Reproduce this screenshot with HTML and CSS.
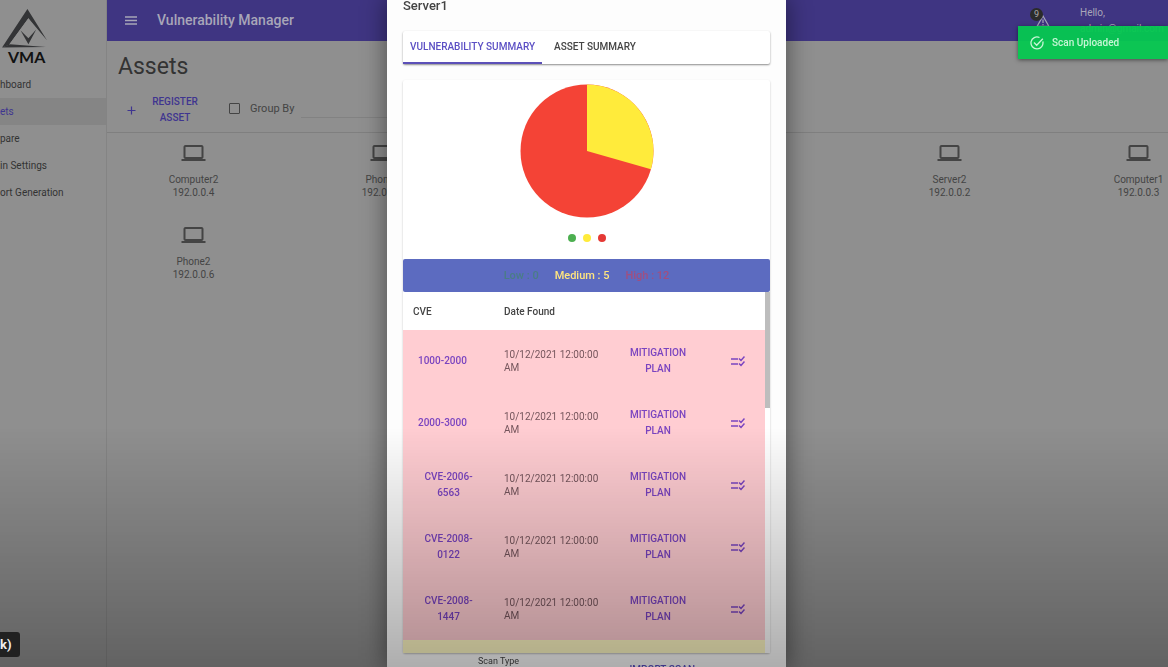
FILE: index.html
```html
<!DOCTYPE html>
<html lang="en">
<head>
<meta charset="utf-8">
<title>Vulnerability Manager</title>
<link rel="stylesheet" href="styles.css">
</head>
<body>
<svg class="sprite" aria-hidden="true">
  <symbol id="laptop" viewBox="0 0 24 24"><path d="M20 18c1.100 0 2-.9 2-2V6c0-1.100-.9-2-2-2H4c-1.100 0-2 .9-2 2v10c0 1.100.9 2 2 2H0v2h24v-2h-4zM4 6h16v10H4V6z"/></symbol>
  <symbol id="rule" viewBox="0 0 14 12"><path d="M0 4h7M0 9h7M8 3.500l2 2L13.500 1.500M8 8.500l2 2L13.500 6.500" fill="none" stroke="currentColor" stroke-width="1.500"/></symbol>
</svg>
<div class="app">
  <aside class="sidebar">
    <div class="brand">
      <svg class="brand-mark" viewBox="0 0 48 42" aria-hidden="true">
        <path d="M27 0L1 39.500L8 37L28 9.500L47 32Z" fill="#333436"/>
        <path d="M28 9.500L8 37L46 38L41 28Z" fill="#8f8f8f"/>
        <path d="M1 39.500L9 36L46 39Z" fill="#333436"/>
        <path d="M20 22L28 30L36 21L28 36Z" fill="#333436"/>
      </svg>
      <span class="brand-name">VMA</span>
    </div>
    <nav class="nav">
      <a href="#dashboard" aria-label="Dashboard">hboard</a>
      <a href="#assets" aria-label="Assets" class="active">ets</a>
      <a href="#compare" aria-label="Compare">pare</a>
      <a href="#admin" aria-label="Admin Settings">in Settings</a>
      <a href="#reports" aria-label="Report Generation">ort Generation</a>
    </nav>
  </aside>
  <div class="main">
    <header class="topbar">
      <button class="menu" aria-label="Menu"><svg width="12" height="9" viewBox="0 0 12 9"><path d="M0 1h12M0 4.500h12M0 8h12" stroke="currentColor" stroke-width="1.300"/></svg></button>
      <span class="app-name">Vulnerability Manager</span>
      <button class="alerts" aria-label="Alerts"><svg width="14" height="12" viewBox="0 0 14 12"><path d="M7 1L13 11.400H1ZM7 4.500v3.500M7 9v1.200" fill="none" stroke="currentColor" stroke-width="1.200"/></svg><span class="badge">9</span></button>
      <div class="user"><span>Hello,</span><span>admin@gmail.com</span></div>
    </header>
    <h1>Assets</h1>
    <div class="toolbar">
      <button class="register"><svg width="9" height="9" viewBox="0 0 9 9"><path d="M4.500 0.500v8M0.500 4.500h8" stroke="currentColor" stroke-width="1.200"/></svg><span>REGISTER ASSET</span></button>
      <label class="group"><input type="checkbox">Group By</label>
      <select class="group-field" aria-label="Group field"><option></option></select>
    </div>
    <div class="assets">
      <div class="asset"><svg><use href="#laptop"/></svg><span>Computer2</span><span>192.0.0.4</span></div>
      <div class="asset"><svg><use href="#laptop"/></svg><span>Phone1</span><span>192.0.0.5</span></div>
      <div class="asset"></div>
      <div class="asset"></div>
      <div class="asset"><svg><use href="#laptop"/></svg><span>Server2</span><span>192.0.0.2</span></div>
      <div class="asset"><svg><use href="#laptop"/></svg><span>Computer1</span><span>192.0.0.3</span></div>
      <div class="asset"><svg><use href="#laptop"/></svg><span>Phone2</span><span>192.0.0.6</span></div>
    </div>
  </div>
</div>

<div class="overlay">
  <section class="dialog" role="dialog" aria-labelledby="dialog-title">
    <h2 id="dialog-title">Server1</h2>
    <div class="tabs" role="tablist">
      <button role="tab" aria-selected="true" class="selected">VULNERABILITY SUMMARY</button>
      <button role="tab" aria-selected="false">ASSET SUMMARY</button>
    </div>
    <div class="card">
      <div class="chart">
        <svg width="134" height="134" viewBox="-67 -67 134 134" role="img" aria-label="Vulnerabilities by severity">
          <circle r="66.500" fill="#f44336"/>
          <path d="M0 0V-66.500A66.500 66.500 0 0 1 63.960 18.210Z" fill="#ffeb3b"/>
        </svg>
        <div class="legend"><i class="dot low"></i><i class="dot medium"></i><i class="dot high"></i></div>
      </div>
      <div class="totals"><span class="low">Low : 0</span><span class="medium">Medium : 5</span><span class="high">High : 12</span></div>
      <div class="list">
        <table>
          <colgroup><col class="c-cve"><col class="c-date"><col class="c-plan"><col></colgroup>
          <thead><tr><th>CVE</th><th>Date Found</th><th></th><th></th></tr></thead>
          <tbody>
            <tr><td><button>1000-2000</button></td><td>10/12/2021 12:00:00 AM</td><td class="plan"><button>MITIGATION PLAN</button></td><td class="act"><button aria-label="Resolve"><svg><use href="#rule"/></svg></button></td></tr>
            <tr><td><button>2000-3000</button></td><td>10/12/2021 12:00:00 AM</td><td class="plan"><button>MITIGATION PLAN</button></td><td class="act"><button aria-label="Resolve"><svg><use href="#rule"/></svg></button></td></tr>
            <tr><td><button>CVE-2006-6563</button></td><td>10/12/2021 12:00:00 AM</td><td class="plan"><button>MITIGATION PLAN</button></td><td class="act"><button aria-label="Resolve"><svg><use href="#rule"/></svg></button></td></tr>
            <tr><td><button>CVE-2008-0122</button></td><td>10/12/2021 12:00:00 AM</td><td class="plan"><button>MITIGATION PLAN</button></td><td class="act"><button aria-label="Resolve"><svg><use href="#rule"/></svg></button></td></tr>
            <tr><td><button>CVE-2008-1447</button></td><td>10/12/2021 12:00:00 AM</td><td class="plan"><button>MITIGATION PLAN</button></td><td class="act"><button aria-label="Resolve"><svg><use href="#rule"/></svg></button></td></tr>
            <tr class="warn"><td></td><td></td><td></td><td></td></tr>
          </tbody>
        </table>
        <div class="rail"><div class="thumb"></div></div>
      </div>
    </div>
    <div class="import"><span>Scan Type</span><button>IMPORT SCAN</button></div>
  </section>
</div>

<div class="toast" role="status">
  <svg width="14" height="14" viewBox="0 0 14 14"><path d="M12.800 5.500A6 6 0 1 1 9.500 1.500M4 6.500L6.700 9.200L12.800 2.800" fill="none" stroke="currentColor" stroke-width="1.300"/></svg>
  <span>Scan Uploaded</span>
</div>
<div class="shade"></div>
<div class="hint">k)</div>
</body>
</html>
```
FILE: styles.css
```css
* { box-sizing: border-box; }
body {
  margin: 0;
  height: 100vh;
  overflow: hidden;
  background: #8f8f8f;
  color: #444;
  font: 10px/13px Roboto, "Liberation Sans", sans-serif;
}
button {
  border: 0;
  padding: 0;
  background: none;
  color: inherit;
  font: inherit;
}
.sprite { display: none; }
.app { display: flex; height: 100vh; overflow: hidden; }

.sidebar { flex: 0 0 107px; border-right: 1px solid #848484; }
.brand {
  display: flex;
  flex-direction: column;
  align-items: flex-start;
  height: 71px;
  padding-top: 9px;
}
.brand-mark { width: 49px; height: 41px; }
.brand-name {
  padding-left: 8px;
  color: #111;
  font: 700 16px/14px Lato, sans-serif;
}
.nav { display: flex; flex-direction: column; }
.nav a {
  height: 27px;
  color: #333;
  line-height: 27px;
  text-decoration: none;
}
.nav .active {
  background: #858585;
  color: #3f3590;
}

.main { flex: 1; min-width: 0; overflow: hidden; }
.topbar {
  display: flex;
  align-items: center;
  height: 41px;
  padding-left: 18px;
  background: #3f3582;
  color: #a8a6b8;
}
.menu { display: flex; }
.app-name { margin-left: 20px; font-size: 14px; font-weight: 500; }
.alerts { position: relative; display: flex; margin-left: auto; }
.badge {
  position: absolute;
  right: 7px;
  bottom: 6px;
  width: 13px;
  height: 13px;
  border-radius: 50%;
  background: #2b2b2b;
  color: #aaa;
  font-size: 9px;
  text-align: center;
}
.user {
  display: flex;
  flex-direction: column;
  width: 88px;
  margin-left: 30px;
  line-height: 16px;
}
h1 {
  margin: 0;
  padding: 9px 11px 0;
  color: #333;
  font-size: 23px;
  font-weight: 400;
  line-height: 34px;
}
.toolbar {
  display: flex;
  align-items: center;
  height: 49px;
  padding: 4px 20px 0;
  border-bottom: 1px solid #7f7f7f;
}
.register {
  display: flex;
  align-items: center;
  gap: 12px;
  color: #3f3590;
  font-weight: 500;
  line-height: 16px;
}
.register span { width: 54px; }
.group {
  display: flex;
  align-items: center;
  gap: 10px;
  margin: 0 0 4px 27px;
  font-size: 11px;
}
.group input {
  appearance: none;
  width: 11px;
  height: 11px;
  margin: 0;
  border: 1px solid #444;
  border-radius: 1px;
}
.group-field {
  appearance: none;
  width: 120px;
  height: 20px;
  margin: 0 0 4px 7px;
  border: 0;
  border-bottom: 1px solid #828282;
  background: none;
}
.assets {
  display: grid;
  grid-template-columns: repeat(6, 189px);
  grid-auto-rows: 82px;
  margin-left: -8px;
  padding-top: 8px;
}
.asset { display: flex; flex-direction: column; align-items: center; }
.asset svg {
  width: 25px;
  height: 24px;
  margin-bottom: 8px;
  fill: #444;
}

.overlay {
  position: fixed;
  inset: 0;
  display: flex;
  justify-content: center;
  padding-left: 5px;
}
.dialog {
  display: flex;
  flex-direction: column;
  flex: 0 0 399px;
  height: 100vh;
  overflow: hidden;
  padding: 0 16px;
  background: #fdfdfd;
  box-shadow: 0 0 22px 2px rgba(0, 0, 0, .42);
}
h2 {
  margin: 0 0 20px;
  font-size: 13px;
  font-weight: 500;
  line-height: 11px;
}
.tabs {
  display: flex;
  flex: none;
  height: 33px;
  border-radius: 2px;
  background: #fff;
  box-shadow: 0 1px 2px rgba(0, 0, 0, .45);
}
.tabs button {
  padding: 0 12px;
  border-bottom: 2px solid transparent;
  font-weight: 500;
}
.tabs .selected {
  padding: 0 7px;
  border-color: #5c50b8;
  color: #5b4fc4;
}
.card {
  flex: none;
  margin-top: 16px;
  border-radius: 2px;
  background: #fff;
  box-shadow: 0 1px 2px rgba(0, 0, 0, .25);
}
.chart {
  display: flex;
  flex-direction: column;
  align-items: center;
  height: 179px;
  padding-top: 4px;
}
.legend { display: flex; gap: 7px; margin-top: 16px; }
.dot { width: 8px; height: 8px; border-radius: 50%; }
.dot.low { background: #4caf50; }
.dot.medium { background: #ffeb3b; }
.dot.high { background: #e53935; }
.totals {
  display: flex;
  align-items: center;
  justify-content: center;
  gap: 16px;
  height: 33px;
  border-radius: 2px;
  background: #5c6bc0;
  font-size: 11px;
  font-weight: 500;
}
.totals .low { color: #4a7d86; }
.totals .medium { color: #ffe57f; }
.totals .high { color: #a04f80; }
.list { display: flex; height: 361px; overflow: hidden; }
table {
  flex: 1;
  height: 0;
  border-collapse: collapse;
  table-layout: fixed;
}
.c-cve { width: 91px; }
.c-date { width: 119px; }
.c-plan { width: 90px; }
th { height: 38px; padding: 0 10px; font-weight: 500; text-align: left; }
td { height: 62px; padding: 0 10px; color: #75555c; }
tbody tr { background: #ffcdd2; }
tbody .warn { background: #fff9c4; }
td button {
  padding: 0 5px;
  color: #7a44c0;
  font-weight: 500;
  line-height: 16px;
}
.plan { text-align: center; }
td.act { padding: 0 0 0 28px; }
.act button { display: flex; padding: 0; }
.act svg { width: 14px; height: 12px; }
.rail { flex: 0 0 5px; background: #fff; }
.thumb { height: 116px; background: #bdbdbd; }
.import { display: flex; padding: 2px 75px; font-size: 9px; }
.import button {
  margin: 8px 0 0 auto;
  color: #5b4fc4;
  font-size: 10px;
  font-weight: 500;
}

.toast {
  position: fixed;
  top: 26px;
  right: 0;
  display: flex;
  align-items: center;
  gap: 8px;
  width: 150px;
  height: 33px;
  padding-left: 12px;
  background: rgba(5, 200, 80, .95);
  color: #c8f5d6;
  font-weight: 500;
  box-shadow: 0 1px 4px rgba(0, 0, 0, .5);
}
.shade {
  position: fixed;
  inset: auto 0 0;
  height: 36vh;
  background: linear-gradient(transparent, rgba(0, 0, 0, .31));
  pointer-events: none;
}
.hint {
  position: fixed;
  left: 0;
  bottom: 10px;
  padding: 6px 8px 6px 0;
  border-radius: 0 3px 3px 0;
  background: #212121;
  color: #eee;
  font-size: 13px;
  font-weight: 700;
}
```
